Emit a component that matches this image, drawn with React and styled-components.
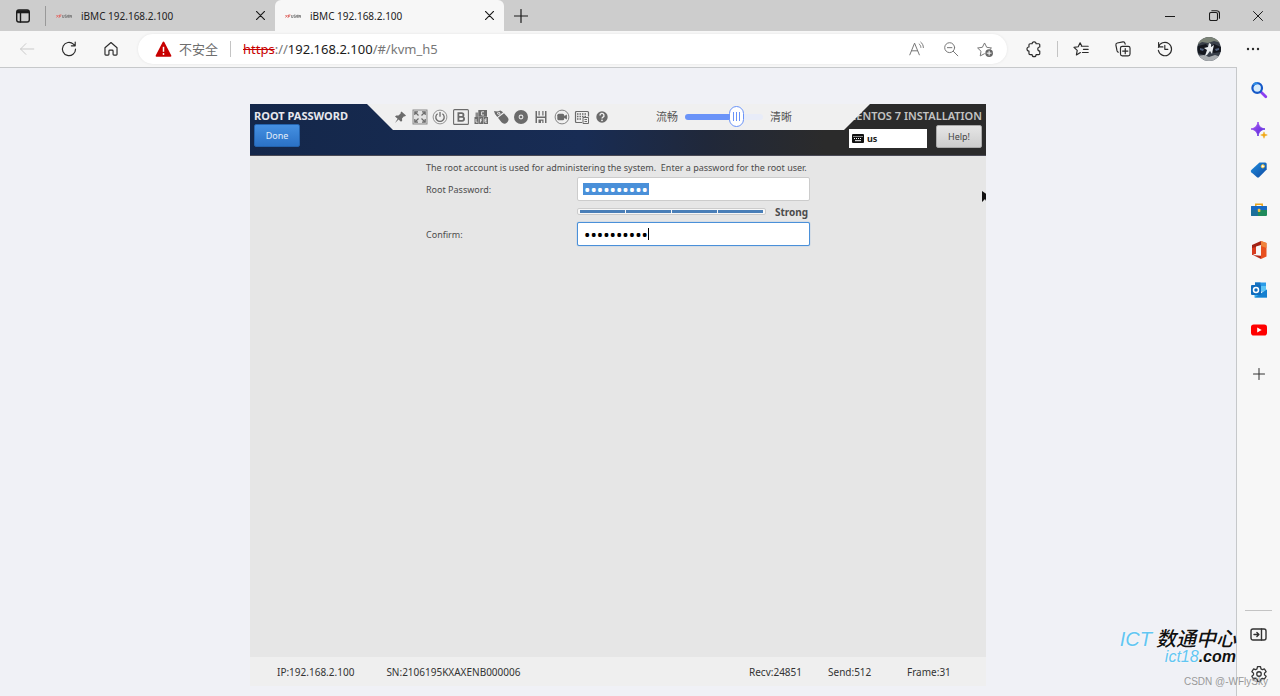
import { useState } from 'react'
import styled, { createGlobalStyle, css } from 'styled-components'

const App = () => (
  <Browser>
    <GlobalStyle />
    <TabStrip />
    <AddressBar />
    <Content>
      <Page>
        <Console />
        <Watermark />
      </Page>
      <Sidebar />
    </Content>
    <Credit>CSDN @-WFlySky</Credit>
  </Browser>
)

export default App

// Browser chrome

const tabs = [
  { id: 1, title: 'iBMC 192.168.2.100' },
  { id: 2, title: 'iBMC 192.168.2.100', active: true },
]

const TabStrip = () => (
  <Strip>
    <StripButton aria-label="Tab actions" $width={45}>
      <TabActionsIcon />
    </StripButton>
    <StripDivider />
    <TabList role="tablist">
      {tabs.map(({ id, title, active }) => (
        <Tab key={id} role="tab" aria-selected={!!active} $active={active}>
          <Favicon />
          <TabTitle>{title}</TabTitle>
          <CloseButton aria-label="Close tab">
            <CrossIcon size={9} weight={1.3} />
          </CloseButton>
        </Tab>
      ))}
    </TabList>
    <StripButton aria-label="New tab" $width={34}>
      <PlusIcon size={14} />
    </StripButton>
    <Spacer />
    <StripButton aria-label="Minimize" $width={44}>
      <Glyph size={10} box={10}>
        <path d="M0 5.5h10" />
      </Glyph>
    </StripButton>
    <StripButton aria-label="Restore" $width={44}>
      <Glyph size={11} box={11}>
        <rect x="0.5" y="2.5" width="8" height="8" rx="1.5" />
        <path d="M2.8 0.7h4.7a3 3 0 0 1 3 3v4.6" />
      </Glyph>
    </StripButton>
    <StripButton aria-label="Close" $width={44}>
      <CrossIcon size={10} weight={1} />
    </StripButton>
  </Strip>
)

const AddressBar = () => (
  <Bar>
    <BarButton aria-label="Back" $faded>
      <Glyph>
        <path d="M17.5 10H3M8.8 4L2.8 10l6 6" />
      </Glyph>
    </BarButton>
    <BarButton aria-label="Refresh">
      <Glyph weight={1.3}>
        <path d="M17.3 10a7.3 7.3 0 1 1-2.4-5.4l1.6 1.6M16.9 2.2v4.3h-4.3" />
      </Glyph>
    </BarButton>
    <BarButton aria-label="Home">
      <Glyph weight={1.3}>
        <path d="M3.3 8.6L10 2.8l6.7 5.8v7.2a1 1 0 0 1-1 1h-2.4a1 1 0 0 1-1-1v-3.6a1 1 0 0 0-1-1H8.7a1 1 0 0 0-1 1v3.6a1 1 0 0 1-1 1H4.3a1 1 0 0 1-1-1z" />
      </Glyph>
    </BarButton>
    <Omnibox>
      <SecurityButton>
        <WarningIcon />
        不安全
      </SecurityButton>
      <Separator />
      <Url href="#/kvm_h5">
        <Scheme>https</Scheme>://<Host>192.168.2.100</Host>/#/kvm_h5
      </Url>
      <BarButton aria-label="Read aloud" $width={34} $muted>
        <Glyph>
          <path d="M2 16.5L7.3 3.5l5.3 13M3.9 12h6.8M12.4 4.4c1.2 1 1.8 2.2 1.9 3.8M14.2 2.4c1.9 1.5 2.8 3.5 2.9 6" />
        </Glyph>
      </BarButton>
      <BarButton aria-label="Zoom" $width={34} $muted>
        <Glyph>
          <circle cx="8.5" cy="8.5" r="5.5" />
          <path d="M6 8.5h5M12.6 12.6l5 5" />
        </Glyph>
      </BarButton>
      <BarButton aria-label="Add to favorites" $width={34} $muted>
        <Glyph>
          <path d="M9.3 15.3l-4.6 2.4.9-5.2L1.8 8.9l5.3-.8L9.5 3.3l2.4 4.8 5.3.8-1.6 1.5" />
          <circle cx="14.6" cy="14.6" r="4.2" fill="#666" stroke="none" />
          <path d="M14.6 12.4v4.4M12.4 14.6h4.4" stroke="#fff" />
        </Glyph>
      </BarButton>
    </Omnibox>
    <BarButton aria-label="Extensions">
      <Glyph weight={1.3}>
        <path d="M5.6 4.2h2.3a2.2 2.2 0 0 1 4.4 0h2.9a1.2 1.2 0 0 1 1.2 1.2v2.4a2.2 2.2 0 0 0 0 4.4v2.9a1.2 1.2 0 0 1-1.2 1.2h-2.9a2.2 2.2 0 0 1-4.4 0H5.6a1.2 1.2 0 0 1-1.2-1.2v-2.9a2.2 2.2 0 0 1 0-4.4V5.4a1.2 1.2 0 0 1 1.2-1.2z" />
      </Glyph>
    </BarButton>
    <Separator $tight />
    <BarButton aria-label="Favorites">
      <Glyph weight={1.3}>
        <path d="M10.4 6.9H18M12.7 10.4H18M11.6 13.9H18M9.3 14l-4.4 2.6.9-5L2.2 8.2l4.7-.7L9 3.1l1.7 3.3" />
      </Glyph>
    </BarButton>
    <BarButton aria-label="Collections">
      <Glyph weight={1.3}>
        <rect x="7.2" y="7" width="10.6" height="10.6" rx="2" />
        <path d="M12.5 9.4v5.8M9.6 12.3h5.8M4.9 13.6a2 2 0 0 1-1.5-1.5L2.1 5.6a2 2 0 0 1 1.5-2.3l6.3-1.2a2 2 0 0 1 2.3 1.6l.2 1" />
      </Glyph>
    </BarButton>
    <BarButton aria-label="History">
      <Glyph weight={1.3}>
        <path d="M2.7 8.2a7.4 7.4 0 1 1-.1 3.2M2.9 2.8v4.9h4.8M9.8 6v4.4h3.4" />
      </Glyph>
    </BarButton>
    <BarButton aria-label="Profile" $width={46}>
      <Avatar />
    </BarButton>
    <BarButton aria-label="Settings and more">
      <Glyph size={14} box={14}>
        <g fill="currentColor" stroke="none">
          <circle cx="2" cy="7" r="1.2" />
          <circle cx="7" cy="7" r="1.2" />
          <circle cx="12" cy="7" r="1.2" />
        </g>
      </Glyph>
    </BarButton>
  </Bar>
)

const Sidebar = () => (
  <Side>
    {sideApps.map(({ name, Icon }) => (
      <SideButton key={name} aria-label={name}>
        <Icon />
      </SideButton>
    ))}
    <AddButton aria-label="Customize">
      <PlusIcon size={12} />
    </AddButton>
    <Spacer />
    <SideDivider />
    <SideButton aria-label="Hide sidebar">
      <Glyph size={17} box={17} weight={1.4}>
        <rect x="1" y="3" width="15" height="11" rx="2" />
        <path d="M11.5 3v11M4 8.5h4.8M6.9 6.5l2 2-2 2" />
      </Glyph>
    </SideButton>
    <SideButton aria-label="Settings">
      <Glyph size={18} box={20} weight={1.4}>
        <path d="M8.3 1.9h3.4l.5 2.4 1.6.9 2.3-.8 1.8 3-1.8 1.6v2l1.8 1.6-1.8 3-2.3-.8-1.6.9-.5 2.4H8.3l-.5-2.4-1.6-.9-2.3.8-1.8-3L3.9 11V9L2.1 7.4l1.8-3 2.3.8 1.6-.9z" />
        <circle cx="10" cy="10" r="2.5" />
      </Glyph>
    </SideButton>
  </Side>
)

const Watermark = () => (
  <Mark>
    <MarkTitle>
      <Sky>ICT</Sky>
      <strong>数通中心</strong>
    </MarkTitle>
    <MarkSite>
      <Sky>ict18</Sky>.com
    </MarkSite>
  </Mark>
)

// Remote console

const Console = () => (
  <Viewer>
    <Screen>
      <Header>
        <HeaderSide>
          <Heading>ROOT PASSWORD</Heading>
          <DoneButton>Done</DoneButton>
        </HeaderSide>
        <HeaderSide $end>
          <Product>CENTOS 7 INSTALLATION</Product>
          <HeaderRow>
            <LayoutButton>
              <KeyboardIcon />
              us
            </LayoutButton>
            <HelpButton>Help!</HelpButton>
          </HeaderRow>
        </HeaderSide>
        <Toolbar />
      </Header>
      <PasswordForm />
      <Pointer viewBox="0 0 5 14">
        <path d="M1 1v11l3-3 1.500 3V4z" />
      </Pointer>
    </Screen>
    <StatusBar>
      <span>IP:192.168.2.100</span>
      <span>SN:2106195KXAXENB000006</span>
      <Stats>
        <span>Recv:24851</span>
        <span>Send:512</span>
        <span>Frame:31</span>
      </Stats>
    </StatusBar>
  </Viewer>
)

const Toolbar = () => {
  const [quality, setQuality] = useState(70)

  return (
    <Tools>
      <ToolGroup>
        {tools.map(({ name, icon }) => (
          <ToolButton key={name} aria-label={name}>
            <svg width="16" height="16" viewBox="0 0 16 16" fill="none">
              {icon}
            </svg>
          </ToolButton>
        ))}
      </ToolGroup>
      <Quality>
        <label htmlFor="quality">流畅</label>
        <Slider
          id="quality"
          type="range"
          value={quality}
          onChange={(e) => setQuality(Number(e.target.value))}
          style={{ '--fill': `${quality}%` }}
        />
        <span>清晰</span>
      </Quality>
    </Tools>
  )
}

const PasswordForm = () => (
  <Form onSubmit={(e) => e.preventDefault()}>
    <Intro>
      {'The root account is used for administering the system.  Enter a password for the root user.'}
    </Intro>
    <label htmlFor="password">Root Password:</label>
    <Password id="password" defaultValue="0123456789" $selected />
    <Strength>
      <Meter role="meter" aria-label="Strength" aria-valuenow={4} aria-valuemax={4}>
        {[1, 2, 3, 4].map((n) => (
          <Segment key={n} />
        ))}
      </Meter>
      <strong>Strong</strong>
    </Strength>
    <label htmlFor="confirm">Confirm:</label>
    <Password id="confirm" defaultValue="0123456789" $focused />
  </Form>
)

// Icons

const Glyph = ({ size = 18, box = 20, weight = 1.1, children }) => (
  <svg
    width={size}
    height={size}
    viewBox={`0 0 ${box} ${box}`}
    fill="none"
    stroke="currentColor"
    strokeWidth={weight}
    strokeLinecap="round"
    strokeLinejoin="round"
  >
    {children}
  </svg>
)

const CrossIcon = ({ size, weight }) => (
  <Glyph size={size} box={10} weight={weight}>
    <path d="M0.500 0.500l9 9M9.500 0.500l-9 9" />
  </Glyph>
)

const PlusIcon = ({ size }) => (
  <Glyph size={size} box={14} weight={1.2}>
    <path d="M7 0.500v13M0.500 7h13" />
  </Glyph>
)

const TabActionsIcon = () => (
  <Glyph size={16} box={16} weight={1.4}>
    <rect x="1.700" y="2" width="12.600" height="12" rx="2.200" />
    <path d="M2 3.800h12" strokeWidth="3" strokeLinecap="butt" />
    <path d="M5.500 5v9" />
  </Glyph>
)

const Favicon = () => (
  <svg width="16" height="16" viewBox="0 0 16 16">
    <path d="M0.500 7l2 2.500M2.500 7l-2 2.500M3.500 9.500V7h2M3.500 8.200h1.500" stroke="#e0706c" fill="none" />
    <path
      d="M6.500 7v2.500h1.500V7M10.500 7H9v1.200h1.500v1.300H9M11.500 7v2.500M12.500 7v2.500h.8V7zM14.300 9.500V7l1.200 2.500V7"
      stroke="#777"
      strokeWidth="0.700"
      fill="none"
    />
  </svg>
)

const WarningIcon = () => (
  <svg width="17" height="17" viewBox="0 0 17 17">
    <path d="M8.500 1.500l7 13.300h-14z" fill="#c80000" stroke="#c80000" strokeWidth="1.800" strokeLinejoin="round" />
    <path d="M8.500 5.800v5" stroke="#fff" strokeWidth="1.500" />
    <circle cx="8.500" cy="13" r="0.900" fill="#fff" />
  </svg>
)

const Avatar = () => (
  <svg width="24" height="24" viewBox="0 0 24 24">
    <clipPath id="avatar">
      <circle cx="12" cy="12" r="12" />
    </clipPath>
    <g clipPath="url(#avatar)">
      <path fill="#39404a" d="M0 0h24v24H0z" />
      <path fill="#7c8478" d="M0 0h24v6l-7-2-6 2-6-1-5 3z" />
      <path fill="#15181f" d="M1 9l8-2 3 4 5-4 7 3v5l-7 1-5-2-5 4-6-2z" />
      <path fill="#a9adb0" d="M0 19l7-1 5 2 6-2 6 2v4H0z" />
      <path fill="#e9edf0" d="M12 6l2 1 0 3 3-2-1 4-1 5-2-3-3 4-2 1 2-6-3-2 4-1z" />
      <path fill="#52617c" d="M3 11l4 1-1 2-3-1zM18 12l4-1v2l-3 1z" />
    </g>
  </svg>
)

const KeyboardIcon = () => (
  <svg width="12" height="9" viewBox="0 0 12 9">
    <rect width="12" height="9" rx="1" fill="#111" />
    <path d="M1.500 2.500h9M2 4.500h8" stroke="#fff" strokeDasharray="1 1" />
    <path d="M3 6.700h6" stroke="#fff" />
  </svg>
)

const SearchApp = () => (
  <svg width="18" height="18" viewBox="0 0 18 18" fill="none">
    <path d="M11 11l4.800 4.800" stroke="#8b3ff0" strokeWidth="2.800" strokeLinecap="round" />
    <circle cx="7.200" cy="7" r="4.800" stroke="#1559c8" strokeWidth="2.200" fill="#d7ecfb" />
    <path d="M3.500 4a4.800 4.800 0 0 1 4-1.800" stroke="#2e8de6" strokeWidth="2.200" />
  </svg>
)

const DiscoverApp = () => (
  <svg width="18" height="18" viewBox="0 0 18 18">
    <defs>
      <linearGradient id="spark" x1="0" y1="0" x2="1" y2="1">
        <stop offset="0" stopColor="#b05cf5" />
        <stop offset="1" stopColor="#4d22d8" />
      </linearGradient>
    </defs>
    <path
      fill="url(#spark)"
      stroke="url(#spark)"
      strokeLinejoin="round"
      d="M8 1c1 5 2.500 6 7 7-4.500 1-6 2.500-7 7-1-4.500-2.500-6-7-7 4.500-1 6-2.500 7-7z"
    />
    <path
      fill="#f0a818"
      stroke="#f0a818"
      strokeWidth="0.500"
      d="M14 10.800c.5 2.300 1 2.700 3.300 3.200-2.300.5-2.800 1-3.300 3.300-.5-2.300-1-2.800-3.300-3.300 2.300-.5 2.800-.9 3.300-3.200z"
    />
  </svg>
)

const ShoppingApp = () => (
  <svg width="18" height="18" viewBox="0 0 18 18">
    <defs>
      <linearGradient id="tag" x1="0" y1="0" x2="1" y2="1">
        <stop offset="0" stopColor="#1f8fe0" />
        <stop offset="1" stopColor="#1048a0" />
      </linearGradient>
    </defs>
    <path fill="url(#tag)" d="M9.500 1.500h5.700a1.500 1.500 0 0 1 1.500 1.500v5.500L9 16.300a1.500 1.500 0 0 1-2 0L1.300 11.200a1.500 1.500 0 0 1 0-2.200z" />
    <circle cx="12.800" cy="5.300" r="1.600" fill="#fff" stroke="#f3c33a" strokeWidth="1" />
  </svg>
)

const ToolsApp = () => (
  <svg width="18" height="18" viewBox="0 0 18 18">
    <path d="M5.800 5V3.200h6.400V5" fill="none" stroke="#e9a41c" strokeWidth="1.500" />
    <rect x="1" y="5" width="16" height="10" rx="1" fill="#1f8a5b" />
    <path d="M1 9V6a1 1 0 0 1 1-1h14a1 1 0 0 1 1 1v3z" fill="#1769c4" />
    <path d="M1 9h7v6H2a1 1 0 0 1-1-1z" fill="#1b6f9a" />
    <rect x="7.800" y="7.800" width="2.600" height="3.200" rx="0.800" fill="#f6c443" />
  </svg>
)

const OfficeApp = () => (
  <svg width="18" height="20" viewBox="0 0 18 20">
    <path fill="#e8501f" d="M11 1l5.500 2v13.500L11 19z" />
    <path fill="#f0843c" d="M11 1l5.500 2v5L11 6z" />
    <path fill="#a32315" d="M11 1v4L6 6.500v7L2 15V5z" />
    <path fill="#d83b1e" d="M2 8l4-1v6.500L2 15z" />
    <path fill="#b62a1a" d="M3 15l8 .8V19z" />
  </svg>
)

const OutlookApp = () => (
  <svg width="18" height="18" viewBox="0 0 18 18">
    <path fill="#2a9be8" d="M5 1.500h11v9H5z" />
    <path fill="#1471c0" d="M5 1.500h5.500v4.500H5z" />
    <path fill="#5cc4f5" d="M10.500 5H16v5h-5.500z" />
    <path fill="#35b0f0" d="M4.500 8.500l6.500 4 6-4v8H4.500z" />
    <path fill="#1580d0" d="M4.500 16.500l12.500-8v8z" />
    <rect x="1" y="4" width="10" height="10" rx="1" fill="#0f6cbd" />
    <circle cx="6" cy="9" r="2.500" fill="none" stroke="#fff" strokeWidth="1.500" />
  </svg>
)

const YoutubeApp = () => (
  <svg width="18" height="18" viewBox="0 0 18 18">
    <rect x="1" y="3.500" width="16" height="11" rx="2.800" fill="#f00" />
    <path fill="#fff" d="M7.200 6.500v5l4.500-2.500z" />
  </svg>
)

const sideApps = [
  { name: 'Search', Icon: SearchApp },
  { name: 'Discover', Icon: DiscoverApp },
  { name: 'Shopping', Icon: ShoppingApp },
  { name: 'Tools', Icon: ToolsApp },
  { name: 'Office', Icon: OfficeApp },
  { name: 'Outlook', Icon: OutlookApp },
  { name: 'YouTube', Icon: YoutubeApp },
]

const ink = '#6b6b6b'

const tools = [
  {
    name: 'Pin',
    icon: (
      <path
        fill={ink}
        d="M9.500 2.500l4.500 4-1.200.9-.8-.2-2 2.400.2 2.200-1.200.9-2.400-2.200L3 14l2.600-4.300L3 7.400l1.200-1 2.300.1 2.300-2.200-.2-.9z"
      />
    ),
  },
  {
    name: 'Full screen',
    icon: (
      <>
        <rect x="1" y="1" width="14" height="14" fill="#e2e2e2" stroke="#8a8a8a" />
        <path
          stroke={ink}
          strokeWidth="1.200"
          d="M2.800 6V2.800H6M10 2.800h3.200V6M13.200 10v3.200H10M6 13.200H2.800V10M3 3l3.500 3.500M13 3L9.500 6.500M13 13L9.500 9.500M3 13l3.500-3.500"
        />
      </>
    ),
  },
  {
    name: 'Power',
    icon: (
      <>
        <circle cx="8" cy="8" r="6.900" stroke="#888" strokeWidth="0.900" />
        <path stroke={ink} strokeWidth="1.300" d="M5.600 4.800a4.200 4.200 0 1 0 4.800 0M8 3v4.800" />
      </>
    ),
  },
  {
    name: 'Boot options',
    icon: (
      <>
        <rect x="0.600" y="0.600" width="14.800" height="14.800" rx="1" stroke={ink} strokeWidth="1.100" />
        <path
          stroke={ink}
          strokeWidth="1.800"
          d="M5.400 4.200h3.300a1.800 1.800 0 0 1 0 3.600H5.400zM5.400 7.800h3.700a2 2 0 0 1 0 4H5.400z"
        />
      </>
    ),
  },
  {
    name: 'Shortcut keys',
    icon: (
      <>
        <path fill={ink} d="M5.300 1H14v6.800H5.300zM1.500 8h4.200v7H1.500zM6.100 8h4v7h-4zM10.500 8H15v7h-4.500z" />
        <path fill="#8a8a8a" d="M2.500 3.500h2.800V8H2.500z" />
        <path
          stroke="#ececec"
          strokeWidth="0.900"
          d="M11 2.800H8.600v3.200H11M3 10v3.200h1.600M7.500 13.500V10h1.600M7.500 11.700h1.400M12 10h1.900M12 13.200h1.900M12 10v3.200M12 11.600h1.500"
        />
      </>
    ),
  },
  {
    name: 'Mouse',
    icon: (
      <>
        <path fill={ink} d="M5 8.800l6-4.600 3.200 3.600a3.900 3.900 0 0 1-5.700 5.500z" />
        <path fill={ink} d="M1 2l3.200.600L7.500 1.500l2.600 1.800-5.800 4.600L2 5z" />
        <circle cx="5.800" cy="4.300" r="1.500" fill="#f0f0f0" />
        <circle cx="5.800" cy="4.300" r="0.700" fill={ink} />
      </>
    ),
  },
  {
    name: 'Virtual CD',
    icon: (
      <>
        <circle cx="8" cy="8" r="7" fill={ink} />
        <circle cx="8" cy="8" r="1.900" stroke="#e5e5e5" strokeWidth="1.100" />
      </>
    ),
  },
  {
    name: 'Virtual floppy',
    icon: (
      <path
        fill={ink}
        d="M2.500 2h1.500v5.600h8V2h1.500v12H12V9H4v5H2.500zM5.500 2h1.200v4.400H5.500zM9.300 2h1.200v4.400H9.300zM5.500 10.500h5V14H9.300v-2.200H8V14H5.500z"
      />
    ),
  },
  {
    name: 'Record',
    icon: (
      <>
        <circle cx="8" cy="8" r="6.900" stroke="#777" strokeWidth="0.900" />
        <rect x="3.300" y="4.800" width="6.900" height="6.400" rx="1.500" fill={ink} />
        <path fill={ink} d="M10 7.300l2.900-1.700v4.800L10 8.700z" />
      </>
    ),
  },
  {
    name: 'Keyboard',
    icon: (
      <>
        <path stroke={ink} strokeWidth="1.200" d="M8 13.500H2.500a1 1 0 0 1-1-1v-9a1 1 0 0 1 1-1h11a1 1 0 0 1 1 1v4" />
        <path stroke={ink} strokeWidth="1.300" strokeDasharray="1.500 1" d="M3 5h10M3 7.500h10M3 10h4" />
        <path fill="#f0f0f0" stroke={ink} d="M9 8.500h5.500v6H9zM10.500 10.500H13M10.500 12.500H13" />
      </>
    ),
  },
  {
    name: 'Help',
    icon: (
      <>
        <circle cx="8" cy="8" r="5.700" fill={ink} />
        <path stroke="#f0f0f0" strokeWidth="1.400" d="M6 6.500a2 2 0 1 1 3 1.600c-.7.400-1 .7-1 1.400" />
        <circle cx="8" cy="11.300" r="0.900" fill="#f0f0f0" />
      </>
    ),
  },
]

// Styles

const GlobalStyle = createGlobalStyle`
  *, *::before, *::after {
    box-sizing: border-box;
  }

  body {
    margin: 0;
    font-family: 'Noto Sans', 'Noto Sans CJK SC', sans-serif;
    font-size: 10px;
    color: #333;
  }

  button, input {
    font: inherit;
    color: inherit;
  }

  button {
    padding: 0;
    border: 0;
    background: none;
  }

  svg {
    display: block;
    flex: none;
  }
`

const center = css`
  display: flex;
  align-items: center;
  justify-content: center;
`

const Browser = styled.div`
  position: relative;
  min-height: 100vh;

  display: flex;
  flex-direction: column;

  background: #f7f7f7;
`

const Spacer = styled.div`
  flex: 1;
`

const Strip = styled.header`
  height: 31px;

  display: flex;

  background: #cdcdcd;
`

const StripButton = styled.button`
  ${center}
  width: ${({ $width }) => $width}px;

  color: #1b1b1b;
`

const StripDivider = styled.div`
  width: 1px;
  height: 20px;
  margin-top: 6px;

  background: #999;
`

const TabList = styled.div`
  display: flex;
`

const Tab = styled.div`
  width: 229px;
  padding: 0 7px 0 10px;

  display: flex;
  align-items: center;
  gap: 9px;

  color: #222;
  border-radius: 6px 6px 0 0;
  background: ${({ $active }) => ($active ? '#f7f7f7' : 'none')};
`

const TabTitle = styled.span`
  flex: 1;
`

const CloseButton = styled.button`
  ${center}
  width: 16px;
  height: 16px;

  color: #1b1b1b;
`

const Bar = styled.nav`
  height: 36px;
  padding: 0 6px;

  display: flex;
  align-items: center;
`

const BarButton = styled.button`
  ${center}
  width: ${({ $width = 42 }) => $width}px;
  height: 30px;

  color: ${({ $faded, $muted }) => ($faded ? '#c9c9c9' : $muted ? '#757575' : '#2b2b2b')};
`

const Omnibox = styled.div`
  flex: 1;
  height: 30px;
  margin: 0 6px;
  padding: 0 5px 0 17px;

  display: flex;
  align-items: center;

  background: #fff;
  border-radius: 15px;
  box-shadow: 0 0 3px rgba(0, 0, 0, 0.08);
`

const SecurityButton = styled.button`
  display: flex;
  align-items: center;
  gap: 7px;

  font-family: 'Noto Sans CJK SC', sans-serif;
  font-size: 13px;
  line-height: 16px;
  color: #6e6e6e;
`

const Separator = styled.div`
  width: 1px;
  height: 16px;
  margin: ${({ $tight }) => ($tight ? '0 2px' : '0 12px')};

  background: #c4c4c4;
`

const Url = styled.a`
  flex: 1;

  font-size: 13px;
  color: #777;
  text-decoration: none;
`

const Scheme = styled.span`
  color: #c80000;
  text-decoration: line-through;
`

const Host = styled.span`
  color: #1b1b1b;
`

const Content = styled.div`
  flex: 1;

  display: flex;
`

const Page = styled.main`
  position: relative;
  flex: 1;
  padding: 36px 16px 10px;

  display: flex;
  justify-content: center;

  background: #f0f1f6;
  border: solid #c6c8ca;
  border-width: 1px 1px 0 0;
`

const Side = styled.aside`
  width: 43px;
  padding: 3px 0 2px;

  display: flex;
  flex-direction: column;
`

const SideButton = styled.button`
  ${center}
  height: 40px;

  color: #333;
`

const AddButton = styled(SideButton)`
  margin-top: 4px;
`

const SideDivider = styled.div`
  height: 1px;
  margin: 0 8px 3px;

  background: #c4c4c4;
`

const Mark = styled.div`
  position: absolute;
  right: 0;
  bottom: 31px;

  display: flex;
  flex-direction: column;
  align-items: flex-end;

  font-family: 'Liberation Sans', 'Noto Sans CJK SC', sans-serif;
  font-style: italic;
  color: #111;
  text-shadow: 0 0 2px #fff;
`

const MarkTitle = styled.div`
  display: flex;
  gap: 4px;

  font-size: 20px;
  line-height: 20px;

  strong {
    font-weight: 500;
  }
`

const MarkSite = styled.div`
  font-size: 16px;
  font-weight: 700;
  line-height: 16px;
`

const Sky = styled.span`
  font-weight: 400;
  color: #62c6f2;
`

const Credit = styled.div`
  position: absolute;
  right: 12px;
  bottom: 6px;

  font-family: 'Liberation Sans', sans-serif;
  line-height: 16px;
  color: #999;
`

const Viewer = styled.section`
  flex: 1;
  max-width: 736px;

  display: flex;
  flex-direction: column;
`

const Screen = styled.div`
  position: relative;
  flex: 1;
  overflow: hidden;

  font-size: 9px;
  background: #e6e6e6;
`

const Header = styled.div`
  position: relative;
  height: 52px;
  padding: 4px;

  display: flex;
  justify-content: space-between;

  color: #fff;
  background: linear-gradient(90deg, #14274a, #182c54 45%, #20283a 62%, #2b2b2b 78%);
  border-bottom: 1px solid #4a4a55;
`

const HeaderSide = styled.div`
  display: flex;
  flex-direction: column;
  align-items: ${({ $end }) => ($end ? 'flex-end' : 'flex-start')};
`

const Heading = styled.h1`
  margin: 0;

  font-size: 11px;
  font-weight: 700;
  line-height: 16px;
  color: #e8e8ee;
`

const Product = styled.div`
  font-size: 11px;
  font-weight: 600;
  line-height: 16px;
  color: #c4c4c4;
`

const HeaderRow = styled.div`
  display: flex;
  align-items: center;
  gap: 9px;
`

const DoneButton = styled.button`
  width: 46px;
  height: 23px;

  color: #e4eefa;
  background: linear-gradient(#4590e2, #2b72c6);
  border: 1px solid #2463ae;
  border-radius: 2px;
`

const HelpButton = styled(DoneButton)`
  color: #444;
  background: linear-gradient(#e6e6e6, #cdcdcd);
  border-color: #aaa;
`

const LayoutButton = styled.button`
  width: 78px;
  height: 19px;
  margin-top: 5px;
  padding: 0 3px;

  display: flex;
  align-items: center;
  gap: 3px;

  font-weight: 700;
  color: #222;
  background: #fff;
`

const Tools = styled.div`
  position: absolute;
  top: 0;
  left: 117px;
  right: 116px;
  height: 26px;
  padding: 0 78px 0 23px;

  display: flex;
  justify-content: space-between;

  background: #f0f0f0;
  clip-path: polygon(0 0, 100% 0, calc(100% - 26px) 100%, 26px 100%);
`

const ToolGroup = styled.div`
  width: 222px;

  display: flex;
  justify-content: space-between;
`

const ToolButton = styled.button`
  ${center}
  width: 20px;
`

const Quality = styled.div`
  display: flex;
  align-items: center;
  gap: 7px;

  font-size: 11px;
  line-height: 16px;
  color: #555;
`

const Slider = styled.input`
  width: 78px;
  height: 22px;
  margin: 0;

  appearance: none;
  background: none;

  &::-webkit-slider-runnable-track {
    height: 6px;
    border-radius: 3px;
    background: linear-gradient(90deg, #6a93f8 var(--fill), #e8ecf8 var(--fill));
  }

  &::-webkit-slider-thumb {
    appearance: none;
    width: 15px;
    height: 21px;
    margin-top: -8px;
    border: 1px solid #6a93f8;
    border-radius: 8px;
    background:
      linear-gradient(#6a93f8, #6a93f8) 3px 5px / 1px 9px no-repeat,
      linear-gradient(#6a93f8, #6a93f8) 6px 5px / 1px 9px no-repeat,
      linear-gradient(#6a93f8, #6a93f8) 9px 5px / 1px 9px no-repeat,
      #fff;
  }
`

const Form = styled.form`
  width: 384px;
  margin: 0 auto;
  padding-top: 2px;

  display: grid;
  grid-template-columns: 151px 1fr;
  grid-template-rows: 19px 24px 21px 24px;
  align-items: center;

  color: #4c4c4c;
`

const Intro = styled.p`
  grid-column: 1 / -1;
  margin: 0;

  white-space: pre;
`

const Password = styled.input.attrs({ type: 'password' })`
  width: 100%;
  height: 24px;
  padding: 0 6px;

  font-size: 17px;
  color: ${({ $selected }) => ($selected ? '#fff' : '#000')};
  background: #fff;
  border: 1px solid ${({ $focused }) => ($focused ? '#4a90d9' : '#ccc')};
  border-radius: 2px;
  outline: 0;

  ${({ $selected }) =>
    $selected &&
    css`
      background: linear-gradient(#4a90d9, #4a90d9) 5px center / 66px 12px no-repeat #fff;
    `}

  ${({ $focused }) =>
    $focused &&
    css`
      background: linear-gradient(#000, #000) 70px center / 1px 12px no-repeat #fff;
      box-shadow: 0 0 1px #4a90d9;
    `}
`

const Strength = styled.div`
  grid-column: 2;

  display: flex;
  align-items: center;
  gap: 9px;

  font-size: 10px;
`

const Meter = styled.div`
  width: 189px;
  height: 7px;
  padding: 1px 2px;

  display: flex;
  gap: 1px;

  background: #f7f7f7;
  border: 1px solid #ccc;
  border-radius: 2px;
`

const Segment = styled.div`
  flex: 1;

  background: #4a7fb8;
`

const Pointer = styled.svg`
  position: absolute;
  top: 86px;
  right: 0;
  width: 5px;
  height: 14px;

  fill: #111;
`

const StatusBar = styled.footer`
  height: 29px;
  padding-left: 27px;

  display: flex;
  align-items: center;
  gap: 32px;

  color: #333;
  background: #efefef;
`

const Stats = styled.div`
  margin-left: auto;

  display: grid;
  grid-template-columns: repeat(3, 79px);
`
